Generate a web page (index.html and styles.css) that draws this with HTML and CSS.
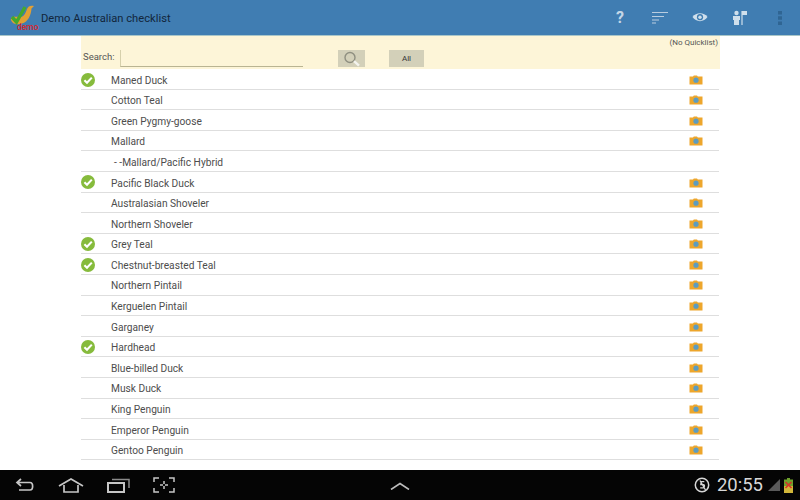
FILE: index.html
```html
<!DOCTYPE html>
<html lang="en">
<head>
<meta charset="utf-8">
<title>Demo Australian checklist</title>
<link rel="stylesheet" href="styles.css">
</head>
<body>
<svg class="defs" width="0" height="0" aria-hidden="true">
  <symbol id="check" viewBox="0 0 14 14">
    <circle cx="7" cy="7" r="7" fill="#86bb3c"/>
    <path d="M3.4 7.2 6 9.8 10.8 4.6" fill="none" stroke="#fff" stroke-width="2.1"/>
  </symbol>
  <symbol id="cam" viewBox="0 0 14 10">
    <path d="M0.5 1.5H4L4.8 0.5H8L8.8 1.5H13.5V9.5H0.5Z" fill="#eda62c"/>
    <circle cx="7" cy="5.2" r="2.6" fill="#5c9cc0"/>
  </symbol>
</svg>
<div class="screen">
  <header class="actionbar">
    <svg class="logo" width="26" height="26" viewBox="0 0 26 26">
      <path d="M1 17C0 14 4 13 9 14C13 14.5 15 12 17 6C18 3 21 2 24 3L21.5 5.5C21 12 18 19 12 20.5C7 22 2 21 1 17Z" fill="#e2a033"/>
      <path d="M2 14 6.5 19 15 4" fill="none" stroke="#43a92e" stroke-width="3.4"/>
    </svg>
    <span class="demo">demo</span>
    <h1 class="title">Demo Australian checklist</h1>
    <div class="actions">
      <span class="action"><span class="help">?</span></span>
      <span class="action"><svg width="18" height="13" viewBox="0 0 18 13"><path d="M1 1.5H17M1 5.5H13M1 9H8M1 12H5" stroke="#b9cde0" stroke-width="1.2"/></svg></span>
      <span class="action"><svg width="16" height="11" viewBox="0 0 16 11"><path d="M0.5 5C4 0 12 0 15.5 5C12 10.5 4 10.5 0.5 5Z" fill="#cfdfec"/><circle cx="8" cy="5.2" r="3.1" fill="#3f7db2"/><circle cx="8" cy="5.2" r="1.7" fill="#cfdfec"/></svg></span>
      <span class="action"><svg width="16" height="15" viewBox="0 0 16 15"><circle cx="4.5" cy="3" r="2.2" fill="#cfdfec"/><path d="M1 6H8V10H7V15H2V10H1Z" fill="#cfdfec"/><path d="M10 1V15" stroke="#cfdfec" stroke-width="1.2"/><path d="M10 1H15V5H10Z" fill="#cfdfec"/></svg></span>
      <span class="action"><svg width="4" height="14" viewBox="0 0 4 14"><path d="M0 0H4V3.6H0ZM0 5.2H4V8.8H0ZM0 10.4H4V14H0Z" fill="#2f6593"/></svg></span>
    </div>
  </header>
  <main class="content">
    <section class="panel">
      <div class="quicklist">(No Quicklist)</div>
      <div class="searchrow">
        <label class="searchlabel" for="q">Search:</label>
        <input class="searchinput" id="q" type="text">
        <button class="btn btn-search" type="button" aria-label="Search">
          <svg width="18" height="16" viewBox="0 0 18 16"><circle cx="7" cy="6.5" r="5" fill="none" stroke="#8f8f80" stroke-width="1.4"/><path d="M11 10.2 16 14.6" stroke="#f4f4ee" stroke-width="2.4"/></svg>
        </button>
        <button class="btn btn-all" type="button">All</button>
      </div>
    </section>
    <ul class="list">
      <li class="row"><svg class="tick"><use href="#check"/></svg><span class="name">Maned Duck</span><svg class="cam"><use href="#cam"/></svg></li>
      <li class="row"><span class="name">Cotton Teal</span><svg class="cam"><use href="#cam"/></svg></li>
      <li class="row"><span class="name">Green Pygmy-goose</span><svg class="cam"><use href="#cam"/></svg></li>
      <li class="row"><span class="name">Mallard</span><svg class="cam"><use href="#cam"/></svg></li>
      <li class="row"><span class="name hybrid">- -Mallard/Pacific Hybrid</span></li>
      <li class="row"><svg class="tick"><use href="#check"/></svg><span class="name">Pacific Black Duck</span><svg class="cam"><use href="#cam"/></svg></li>
      <li class="row"><span class="name">Australasian Shoveler</span><svg class="cam"><use href="#cam"/></svg></li>
      <li class="row"><span class="name">Northern Shoveler</span><svg class="cam"><use href="#cam"/></svg></li>
      <li class="row"><svg class="tick"><use href="#check"/></svg><span class="name">Grey Teal</span><svg class="cam"><use href="#cam"/></svg></li>
      <li class="row"><svg class="tick"><use href="#check"/></svg><span class="name">Chestnut-breasted Teal</span><svg class="cam"><use href="#cam"/></svg></li>
      <li class="row"><span class="name">Northern Pintail</span><svg class="cam"><use href="#cam"/></svg></li>
      <li class="row"><span class="name">Kerguelen Pintail</span><svg class="cam"><use href="#cam"/></svg></li>
      <li class="row"><span class="name">Garganey</span><svg class="cam"><use href="#cam"/></svg></li>
      <li class="row"><svg class="tick"><use href="#check"/></svg><span class="name">Hardhead</span><svg class="cam"><use href="#cam"/></svg></li>
      <li class="row"><span class="name">Blue-billed Duck</span><svg class="cam"><use href="#cam"/></svg></li>
      <li class="row"><span class="name">Musk Duck</span><svg class="cam"><use href="#cam"/></svg></li>
      <li class="row"><span class="name">King Penguin</span><svg class="cam"><use href="#cam"/></svg></li>
      <li class="row"><span class="name">Emperor Penguin</span><svg class="cam"><use href="#cam"/></svg></li>
      <li class="row"><span class="name">Gentoo Penguin</span><svg class="cam"><use href="#cam"/></svg></li>
    </ul>
  </main>
  <footer class="navbar">
    <div class="navleft">
      <svg width="20" height="14" viewBox="0 0 20 14"><path d="M6 1 2 4.5 6 8M2 4.5H15C18.5 4.5 18.5 12 15 12H4" fill="none" stroke="#c6c6c6" stroke-width="1.7"/></svg>
      <svg width="26" height="15" viewBox="0 0 26 15"><path d="M1 8 13 1 25 8M6 7V14H20V7" fill="none" stroke="#c6c6c6" stroke-width="1.7"/></svg>
      <svg width="23" height="15" viewBox="0 0 23 15"><path d="M1 5H17V14H1Z" fill="none" stroke="#c6c6c6" stroke-width="2"/><path d="M5 1.5H22V10" fill="none" stroke="#8a8a8a" stroke-width="1.5"/></svg>
      <svg width="22" height="16" viewBox="0 0 22 16"><path d="M1 5V1H6M16 1H21V5M21 11V15H16M6 15H1V11M11 4V7M11 9V12M7 8H10M12 8H15" fill="none" stroke="#c6c6c6" stroke-width="1.5"/></svg>
    </div>
    <svg class="navup" width="20" height="8" viewBox="0 0 20 8"><path d="M1 7.5 10 1.5 19 7.5" fill="none" stroke="#bdbdbd" stroke-width="1.6"/></svg>
    <div class="status">
      <svg width="16" height="16" viewBox="0 0 16 16"><circle cx="8" cy="8" r="6.7" fill="none" stroke="#d6d6d6" stroke-width="1.5"/><path d="M6 3.5 11.5 13M10.3 4.6H7.2L6.8 7.6H9.6C11 8 10.8 10.6 9 10.8H6.2" fill="none" stroke="#d6d6d6" stroke-width="1.3"/></svg>
      <span class="clock">20:55</span>
      <svg class="signal" width="12" height="12" viewBox="0 0 12 12"><path d="M12 0V12H0Z" fill="#5a5a5a"/></svg>
      <svg width="9" height="15" viewBox="0 0 9 15"><path d="M3 0H6V1.5H9V15H0V1.5H3Z" fill="#6fa12c"/><path d="M0 8H9V15H0Z" fill="#d2b73a"/><path d="M1.5 4 7.5 10M7.5 4 1.5 10" stroke="#d8332a" stroke-width="1.6"/></svg>
    </div>
  </footer>
</div>
</body>
</html>
```
FILE: styles.css
```css
* { box-sizing: border-box; }
html, body { margin: 0; padding: 0; }
body { width: 800px; height: 500px; overflow: hidden; background: #fff; font-family: "Roboto", "Liberation Sans", sans-serif; color: #4a4a4a; }
.defs { position: absolute; }
.screen { width: 800px; height: 500px; display: flex; flex-direction: column; }

.actionbar { height: 36px; flex: none; display: flex; align-items: center; position: relative; background: #407db2; border-bottom: 1px solid #a9c6c8; padding-left: 10px; }
.logo { flex: none; margin-top: -4px; }
.demo { position: absolute; left: 17px; top: 22px; font-size: 8.5px; line-height: 10px; color: #d8262c; font-weight: 500; }
.title { margin: 1px 0 0 5px; font-size: 11.2px; font-weight: 400; color: #12263c; white-space: nowrap; }
.actions { margin-left: auto; display: flex; align-items: center; }
.action { width: 40px; display: flex; align-items: center; justify-content: center; }
.help { font-size: 16px; line-height: 16px; font-weight: 700; color: #c5d7e7; }

.content { flex: 1; min-height: 0; padding: 0 80px 0 81px; }
.panel { height: 33px; background: #fdf5d8; position: relative; padding-top: 14px; }
.quicklist { position: absolute; right: 2px; top: 2px; font-size: 8px; line-height: 10px; color: #555; }
.searchrow { display: flex; align-items: flex-start; }
.searchlabel { font-size: 9.5px; line-height: 14px; margin: 0 0 0 2px; width: 37px; color: #555; }
.searchinput { width: 183px; height: 17px; border: 0; border-bottom: 1px solid #b9b493; border-left: 1px solid #d6d0ac; background: transparent; padding: 0; margin: 0; }
.btn { border: 0; padding: 0; margin: 0; background: #d3d0b9; display: flex; align-items: center; justify-content: center; font-family: inherit; }
.btn-search { width: 27px; height: 17px; margin-left: 35px; }
.btn-all { width: 35px; height: 17px; margin-left: 24px; font-size: 8px; color: #333; }

.list { list-style: none; margin: 0; padding: 0; width: 638px; }
.row { height: 20.6px; display: flex; align-items: center; position: relative; padding: 2.5px 0 0 30px; border-bottom: 1px solid #dedede; }
.tick { position: absolute; left: 0; top: 3.5px; width: 14px; height: 14px; }
.name { font-size: 10.2px; color: #4d4d4d; white-space: nowrap; }
.hybrid { margin-left: 3px; }
.cam { width: 14px; height: 10px; margin: -1px 16px 0 auto; flex: none; }

.navbar { height: 30px; flex: none; background: #050505; display: flex; align-items: center; position: relative; }
.navleft { display: flex; align-items: center; gap: 23px; padding-left: 15px; }
.navup { position: absolute; left: 390px; top: 12px; }
.status { margin-left: auto; display: flex; align-items: center; padding-right: 7.5px; }
.clock { font-size: 18.5px; line-height: 20px; color: #d8d8d8; margin: 0 5px 0 7px; }
.signal { margin-right: 3.5px; }
```
